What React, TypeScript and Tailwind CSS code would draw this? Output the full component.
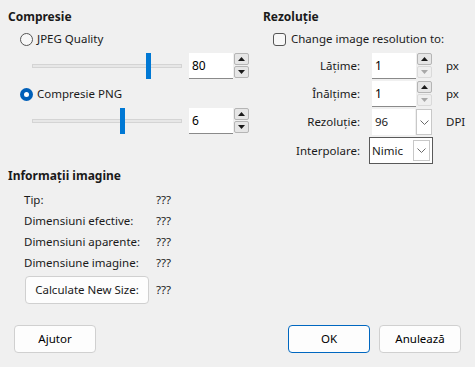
import { useState } from 'react';

const font = { fontFamily: '"Noto Sans", "Liberation Sans", sans-serif' };

function SpinButtons({ downDisabled = false }: { downDisabled?: boolean }) {
  return (
    <div className="flex flex-col gap-[1px] ml-[1px]">
      <div className="w-[15px] h-[12px] bg-[#e6e6e6] border border-[#b5b5b5] rounded-[2px] flex items-center justify-center">
        <svg width="7" height="4" viewBox="0 0 7 4"><path d="M0 4 L3.5 0 L7 4 Z" fill="#1a1a1a" /></svg>
      </div>
      <div
        className={
          downDisabled
            ? 'w-[15px] h-[12px] bg-[#efefef] border border-[#dadada] rounded-[2px] flex items-center justify-center'
            : 'w-[15px] h-[12px] bg-[#e6e6e6] border border-[#b5b5b5] rounded-[2px] flex items-center justify-center'
        }
      >
        <svg width="7" height="4" viewBox="0 0 7 4">
          <path d="M0 0 L3.5 4 L7 0 Z" fill={downDisabled ? '#a8a8a8' : '#1a1a1a'} />
        </svg>
      </div>
    </div>
  );
}

function SpinBox({ value, width, downDisabled }: { value: string; width: string; downDisabled?: boolean }) {
  return (
    <div className="flex items-stretch h-[26px]">
      <div className={`${width} bg-white border-b border-[#8a8a8a] flex items-center pl-[3px] text-[12px] text-black`}>
        {value}
      </div>
      <SpinButtons downDisabled={downDisabled} />
    </div>
  );
}

function Chevron() {
  return (
    <svg width="9" height="5" viewBox="0 0 9 5">
      <path d="M0.5 0.5 L4.5 4.5 L8.5 0.5" fill="none" stroke="#6a6a6a" strokeWidth="1" />
    </svg>
  );
}

function Combo({ value, focused = false }: { value: string; focused?: boolean }) {
  return (
    <div
      className={
        focused
          ? 'flex items-stretch h-[27px] w-[64px] border border-[#595959] bg-white'
          : 'flex items-stretch h-[26px] w-[60px]'
      }
    >
      <div className={focused ? 'flex-1 flex items-center pl-[2px]' : 'flex-1 bg-white flex items-center pl-[3px]'}>
        {value}
      </div>
      <div
        className={
          focused
            ? 'w-[17px] my-[2px] mr-[2px] border border-[#c8c8c8] bg-white flex items-center justify-center'
            : 'w-[16px] ml-[1px] border border-[#c8c8c8] bg-white flex items-center justify-center'
        }
      >
        <Chevron />
      </div>
    </div>
  );
}

function Slider({ pos }: { pos: number }) {
  return (
    <div className="relative w-[150px] h-[26px] flex items-center">
      <div className="w-full h-[4px] bg-[#e7e7e7] border border-[#d4d4d4]" />
      <div className="absolute top-0 w-[5px] h-[26px] bg-[#0078d4]" style={{ left: pos }} />
    </div>
  );
}

function Radio({ checked, label }: { checked: boolean; label: string }) {
  return (
    <div className="flex items-center h-[20px] pl-[12px] gap-[4px]">
      {checked ? (
        <div className="w-[13px] h-[13px] rounded-full bg-[#005fb8] flex items-center justify-center">
          <div className="w-[5px] h-[5px] rounded-full bg-white" />
        </div>
      ) : (
        <div className="w-[13px] h-[13px] rounded-full border border-[#555] bg-[#f7f7f7]" />
      )}
      <span>{label}</span>
    </div>
  );
}

function Button({ label, primary = false, width = 'w-[82px]' }: { label: string; primary?: boolean; width?: string }) {
  return (
    <button
      className={
        primary
          ? `${width} h-[28px] rounded-[4px] bg-[#fdfdfd] border border-[#0067c0] text-black`
          : `${width} h-[28px] rounded-[4px] bg-[#fdfdfd] border border-[#d0d0d0] text-black`
      }
    >
      {label}
    </button>
  );
}

export default function App() {
  const [jpeg] = useState(false);

  const infoRows = ['Tip:', 'Dimensiuni efective:', 'Dimensiuni aparente:', 'Dimensiune imagine:'];

  return (
    <div className="w-[475px] h-[367px] bg-[#f0f0f0] text-[#1a1a1a] flex flex-col text-[11.5px]" style={font}>
      {/* Top */}
      <div className="flex pt-[9px]">
        {/* Compresie */}
        <div className="w-[263px] shrink-0 pl-[8px]">
          <div className="h-[16px] leading-[16px] text-[12px] font-bold">Compresie</div>
          <div className="mt-[4px]">
            <Radio checked={jpeg} label="JPEG Quality" />
          </div>
          <div className="mt-[4px] flex items-center pl-[24px]">
            <Slider pos={114} />
            <div className="ml-[7px]">
              <SpinBox value="80" width="w-[44px]" />
            </div>
          </div>
          <div className="mt-[5px]">
            <Radio checked={!jpeg} label="Compresie PNG" />
          </div>
          <div className="mt-[4px] flex items-center pl-[24px]">
            <Slider pos={88} />
            <div className="ml-[7px]">
              <SpinBox value="6" width="w-[44px]" />
            </div>
          </div>
        </div>

        {/* Rezolutie */}
        <div className="flex-1">
          <div className="h-[16px] leading-[16px] text-[12px] font-bold">Rezoluție</div>
          <div className="mt-[4px] h-[20px] flex items-center pl-[10px] gap-[5px]">
            <div className="w-[13px] h-[13px] rounded-[3px] border border-[#555] bg-[#f7f7f7]" />
            <span>Change image resolution to:</span>
          </div>
          <div className="mt-[4px] flex flex-col gap-[2px]">
            <div className="flex items-center">
              <div className="w-[97px] text-right">Lățime:</div>
              <div className="ml-[12px]">
                <SpinBox value="1" width="w-[44px]" downDisabled />
              </div>
              <span className="ml-[14px]">px</span>
            </div>
            <div className="flex items-center">
              <div className="w-[97px] text-right">Înălțime:</div>
              <div className="ml-[12px]">
                <SpinBox value="1" width="w-[44px]" downDisabled />
              </div>
              <span className="ml-[14px]">px</span>
            </div>
            <div className="flex items-center">
              <div className="w-[97px] text-right">Rezoluție:</div>
              <div className="ml-[12px]">
                <Combo value="96" />
              </div>
              <span className="ml-[14px]">DPI</span>
            </div>
            <div className="flex items-center">
              <div className="w-[97px] text-right">Interpolare:</div>
              <div className="ml-[9px]">
                <Combo value="Nimic" focused />
              </div>
            </div>
          </div>
        </div>
      </div>

      {/* Informatii imagine */}
      <div className="pl-[8px] mt-[4px]">
        <div className="h-[16px] leading-[16px] text-[12px] font-bold">Informații imagine</div>
        <div className="mt-[5px] pl-[16px] flex flex-col">
          {infoRows.map(r => (
            <div key={r} className="h-[21px] flex items-center">
              <span className="w-[132px]">{r}</span>
              <span>???</span>
            </div>
          ))}
          <div className="mt-[3px] flex items-center">
            <button className="w-[124px] h-[28px] rounded-[4px] bg-[#fdfdfd] border border-[#d0d0d0] ml-[1px]">
              Calculate New Size:
            </button>
            <span className="ml-[7px]">???</span>
          </div>
        </div>
      </div>

      {/* Bottom buttons */}
      <div className="mt-auto mb-[14px] flex items-center px-[14px]">
        <Button label="Ajutor" />
        <div className="flex-1" />
        <Button label="OK" primary />
        <div className="w-[9px]" />
        <Button label="Anulează" />
      </div>
    </div>
  );
}
